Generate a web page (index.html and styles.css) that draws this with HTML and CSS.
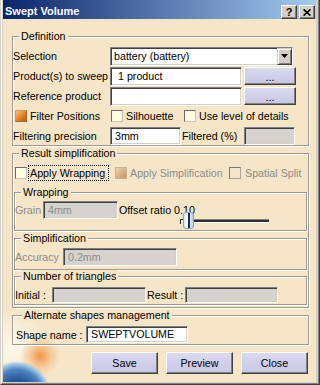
FILE: index.html
```html
<!DOCTYPE html>
<html lang="en">
<head>
  <meta charset="UTF-8">
  <meta name="viewport" content="width=device-width, initial-scale=1.0">
  <title>Swept Volume</title>
  <link rel="stylesheet" href="styles.css">
</head>
<body>
  <div class="window">
    <div class="window__frame">
      <div class="window__inner">
        <div class="titlebar">
          <span class="titlebar__text">Swept Volume</span>
          <div class="titlebar__buttons">
            <span class="title-btn">?</span>
            <span class="title-btn">
              <svg width="8" height="7" viewBox="0 0 8 7"><path d="M0.6 0.4 L7.4 6.6 M7.4 0.4 L0.6 6.6" stroke="#000" stroke-width="1.7" fill="none"/></svg>
            </span>
          </div>
        </div>

        <div class="dialog">
          <fieldset class="group group--def">
            <legend class="group__title">Definition</legend>
            <div class="row">
              <span class="label label--col">Selection</span>
              <div class="combo">
                <span class="combo__text">battery (battery)</span>
                <span class="combo__btn">
                  <svg width="7" height="4" viewBox="0 0 7 4"><polygon points="0,0 7,0 3.5,4" fill="#000"/></svg>
                </span>
              </div>
            </div>
            <div class="row">
              <span class="label label--col">Product(s) to sweep</span>
              <div class="field field--product field--pad7">1 product</div>
              <button class="btn btn--dots">...</button>
            </div>
            <div class="row">
              <span class="label label--col">Reference product</span>
              <div class="field field--product"></div>
              <button class="btn btn--dots">...</button>
            </div>
            <div class="row row--checks">
              <span class="check check--w96"><span class="check__box check__box--on"></span>Filter Positions</span>
              <span class="check check--w73"><span class="check__box"></span>Silhouette</span>
              <span class="check"><span class="check__box"></span>Use level of details</span>
            </div>
            <div class="row row--19">
              <span class="label label--col">Filtering precision</span>
              <div class="field field--precision">3mm</div>
              <span class="label label--filtered">Filtered (%)</span>
              <div class="field field--off field--filtered"></div>
            </div>
          </fieldset>

          <fieldset class="group group--result">
            <legend class="group__title">Result simplification</legend>
            <div class="row row--apply">
              <span class="check check--w100"><span class="check__box"></span><span class="focus">Apply Wrapping</span></span>
              <span class="check check--w114 check--off"><span class="check__box check__box--dim"></span>Apply Simplification</span>
              <span class="check check--off"><span class="check__box check__box--blank"></span>Spatial Split</span>
            </div>

            <fieldset class="group group--inner group--wrap">
              <legend class="group__title">Wrapping</legend>
              <div class="wrap-row">
                <span class="label label--off label--grain">Grain</span>
                <div class="field field--off field--grain">4mm</div>
                <div class="offset">
                  <span class="offset__text">Offset ratio 0.10</span>
                  <div class="slider">
                    <span class="slider__tick"></span>
                    <span class="slider__thumb"><span class="slider__mark"></span></span>
                    <span class="slider__track"></span>
                  </div>
                </div>
              </div>
            </fieldset>

            <fieldset class="group group--inner group--simp">
              <legend class="group__title">Simplification</legend>
              <div class="row row--accuracy">
                <span class="label label--off label--accuracy">Accuracy</span>
                <div class="field field--off field--accuracy">0.2mm</div>
              </div>
            </fieldset>

            <fieldset class="group group--inner group--tri">
              <legend class="group__title">Number of triangles</legend>
              <div class="row row--tri">
                <span class="label label--initial">Initial :</span>
                <div class="field field--off field--initial"></div>
                <span class="label label--result">Result :</span>
                <div class="field field--off field--result"></div>
              </div>
            </fieldset>
          </fieldset>

          <fieldset class="group group--alt">
            <legend class="group__title">Alternate shapes management</legend>
            <div class="row row--shape">
              <span class="label label--shape">Shape name :</span>
              <div class="field field--shape">SWEPTVOLUME</div>
            </div>
          </fieldset>

          <div class="actions">
            <button class="btn btn--action">Save</button>
            <button class="btn btn--action">Preview</button>
            <button class="btn btn--action">Close</button>
          </div>
        </div>
      </div>
    </div>
  </div>
</body>
</html>
```

FILE: styles.css
```css
/* Dialog frame */
* {
  box-sizing: border-box;
}

body {
  margin: 0;
  font-family: "Liberation Sans", Arial, sans-serif;
  font-size: 10.7px;
  color: #000;
}

.window {
  width: 320px;
  height: 385px;
  border-style: solid;
  border-width: 0 1px 1px 1px;
  border-color: #d4d0c8 #404040 #404040 #d4d0c8;
}

.window__frame {
  height: 100%;
  border-style: solid;
  border-width: 0 1px 1px 1px;
  border-color: #fff #808080 #808080 #fff;
}

.window__inner {
  height: 100%;
  border-style: solid;
  border-width: 0 2px 1px 1px;
  border-color: #d4d0c8;
  background:
    radial-gradient(circle 34px at 14px 395px, #17356a 0, #2a5896 45%, #4f84bf 75%, #9cc8e6 91%, rgba(246, 229, 199, 0) 100%),
    radial-gradient(circle 20px at 37px 356px, rgba(240, 140, 50, 0.9) 0, rgba(242, 170, 100, 0.45) 55%, rgba(246, 229, 199, 0) 100%),
    radial-gradient(circle 40px at 8px 348px, rgba(255, 250, 238, 0.9) 0, rgba(246, 229, 199, 0) 100%),
    #f6e5c7;
}

/* Title bar */
.titlebar {
  height: 19px;
  display: flex;
  align-items: flex-start;
  padding: 5px 1px 0 2px;
  background: linear-gradient(90deg, #0a246a, #a6caf0);
}

.titlebar__text {
  color: #fff;
  font-weight: bold;
  font-size: 11px;
  line-height: 13px;
}

.titlebar__buttons {
  margin-left: auto;
  display: flex;
  gap: 2px;
}

.title-btn {
  width: 16px;
  height: 14px;
  display: flex;
  align-items: center;
  justify-content: center;
  background: #d4d0c8;
  border: 1px solid;
  border-color: #fff #404040 #404040 #fff;
  box-shadow: inset -1px -1px 0 #808080;
  font-weight: bold;
  font-size: 11px;
  line-height: 12px;
}

/* Body */
.dialog {
  padding: 11px 7px 0 9px;
}

.group {
  margin: 0;
  padding: 0;
  min-width: 0;
  border: 1px solid #9d9a94;
  box-shadow: 1px 1px 0 #fff, inset 1px 1px 0 #fff;
}

.group__title {
  margin-left: 6px;
  padding: 0 2px;
  line-height: 13px;
  background: #f6e5c7;
}

.group--def {
  padding-top: 3px;
}

.group--result {
  margin-top: 1px;
  padding-bottom: 2px;
}

.group--inner {
  margin: 0 1px;
}

.group--wrap {
  margin-top: 4px;
  padding-bottom: 1px;
}

.group--simp {
  margin-top: 1px;
  padding-bottom: 3px;
}

.group--tri {
  padding-bottom: 1px;
}

.group--alt {
  margin-top: 1px;
  padding: 0 0 1px 3px;
}

.row {
  display: flex;
  align-items: center;
  height: 20px;
}

.row--19 {
  height: 19px;
}

.label {
  flex: none;
  white-space: nowrap;
}

.label--col {
  width: 97px;
}

.label--off {
  color: #8c8c8c;
}

.label--filtered {
  width: 62px;
  margin-left: 1px;
}

/* Text fields */
.field {
  flex: none;
  height: 19px;
  padding: 0 4px;
  line-height: 17px;
  background: #fff;
  border: 1px solid;
  border-color: #808080 #fff #fff #808080;
  box-shadow: inset 1px 1px 0 #404040, inset -1px -1px 0 #d4d0c8;
  white-space: nowrap;
  overflow: hidden;
}

.field--off {
  background: #d6d3ce;
  color: #8c8c8c;
}

.field--pad7 {
  padding-left: 7px;
}

.field--product {
  width: 132px;
}

.field--precision {
  width: 71px;
  height: 18px;
  line-height: 16px;
}

.field--filtered {
  width: 51px;
  height: 18px;
}

.combo {
  flex: none;
  width: 183px;
  height: 19px;
  display: flex;
  background: #fff;
  border: 1px solid;
  border-color: #808080 #fff #fff #808080;
  box-shadow: inset 1px 1px 0 #404040, inset -1px -1px 0 #d4d0c8;
}

.combo__text {
  flex: 1;
  padding-left: 3px;
  line-height: 17px;
}

.combo__btn {
  width: 15px;
  height: 17px;
  display: flex;
  align-items: center;
  justify-content: center;
  background: #d4d0c8;
  border: 1px solid;
  border-color: #d4d0c8 #404040 #404040 #d4d0c8;
  box-shadow: inset 1px 1px 0 #fff, inset -1px -1px 0 #808080;
}

/* Buttons */
.btn {
  flex: none;
  padding: 0;
  font-family: inherit;
  font-size: 10.7px;
  color: #000;
  background: linear-gradient(#dadaf0, #c7c7e4);
  border: 1px solid;
  border-color: #fff #404040 #404040 #fff;
  box-shadow: inset -1px -1px 0 #808080;
}

.btn--dots {
  width: 52px;
  height: 18px;
  margin-left: 2px;
  padding-top: 3px;
  line-height: 11px;
}

.btn--action {
  width: 67px;
  height: 22px;
}

.actions {
  display: flex;
  justify-content: flex-end;
  gap: 8px;
  margin-top: 7px;
  padding-right: 1px;
}

/* Checkboxes */
.row--checks {
  padding-left: 2px;
}

.check {
  flex: none;
  display: flex;
  align-items: center;
  white-space: nowrap;
}

.check--w96 { width: 96px; }
.check--w73 { width: 73px; }
.check--w100 { width: 100px; }
.check--w114 { width: 114px; }

.check--off {
  color: #8c8c8c;
}

.check__box {
  flex: none;
  width: 12px;
  height: 12px;
  margin-right: 3px;
  background: #fffbe0;
  border: 1px solid;
  border-color: #6a6a6a #c8c4bc #c8c4bc #6a6a6a;
}

.check__box--on {
  background: linear-gradient(135deg, #fbc07a, #e07a1c 60%, #b85a10);
  border-color: #c89868 #a06838 #a06838 #c89868;
}

.check__box--dim {
  background: linear-gradient(135deg, #f0d4b0, #d6ad80 60%, #c09468);
  border-color: #c8b090;
}

.check__box--blank {
  background: transparent;
  border-color: #7a7a7a #a8a49c #a8a49c #7a7a7a;
}

.row--apply {
  height: 18px;
  margin-top: 4px;
  padding-left: 2px;
}

.check--w100 .check__box {
  margin-right: 1px;
}

.check--off .check__box--blank {
  margin-right: 4px;
}

.focus {
  width: 81px;
  height: 16px;
  padding-left: 1px;
  line-height: 14px;
  border: 1px dotted #000;
}

/* Wrapping */
.wrap-row {
  display: flex;
  align-items: flex-start;
  margin-top: 2px;
}

.label--grain {
  width: 28px;
  line-height: 18px;
}

.field--grain {
  width: 75px;
  height: 18px;
  line-height: 16px;
}

.offset {
  display: flex;
  flex-direction: column;
  margin-left: 1px;
}

.offset__text {
  line-height: 18px;
  white-space: nowrap;
}

.slider {
  display: flex;
  align-items: center;
  width: 89px;
  height: 17px;
  margin: -7px 0 0 61px;
}

.slider__tick {
  width: 3px;
  height: 5px;
  border-left: 1px solid #303030;
  border-top: 1px solid #303030;
  margin-top: 1px;
}

.slider__thumb {
  width: 11px;
  height: 17px;
  display: flex;
  justify-content: center;
  border: 1px solid #8aa2bc;
  border-radius: 3px;
  background: linear-gradient(90deg, #dce8f4, #fff 45%, #b8cce2);
}

.slider__mark {
  width: 2px;
  background: #10307a;
}

.slider__track {
  flex: 1;
  height: 4px;
  background: #303030;
  border-top: 1px solid #808080;
  border-bottom: 1px solid #fff;
}

/* Simplification / triangles / alternate */
.row--accuracy {
  height: 18px;
  margin-top: 3px;
}

.label--accuracy {
  width: 48px;
}

.field--accuracy {
  width: 114px;
  height: 18px;
  line-height: 16px;
}

.row--tri {
  height: 16px;
  margin-top: 4px;
}

.label--initial {
  width: 37px;
}

.field--initial {
  width: 94px;
  height: 16px;
}

.label--result {
  width: 38px;
  margin-left: 1px;
}

.field--result {
  width: 93px;
  height: 16px;
}

.row--shape {
  height: 17px;
  margin-top: 4px;
}

.label--shape {
  width: 70px;
}

.field--shape {
  width: 102px;
  height: 17px;
  line-height: 15px;
}
```
